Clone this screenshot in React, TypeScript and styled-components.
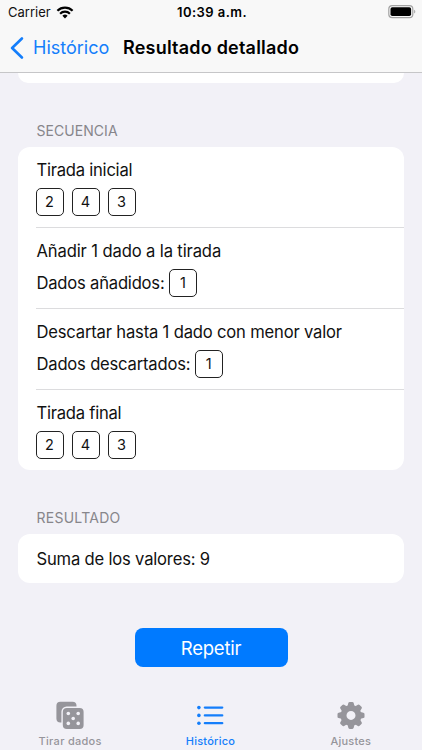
import React from "react";
import styled, { createGlobalStyle } from "styled-components";

const GlobalStyle = createGlobalStyle`
  html, body { margin: 0; padding: 0; background: #f2f1f7; }
  * { box-sizing: border-box; }
`;

const BLUE = "#147efb";

const Screen = styled.div`
  width: 422px;
  height: 750px;
  overflow: hidden;
  display: flex;
  flex-direction: column;
  background: #f2f1f7;
  color: #111;
  font-family: Inter, "Liberation Sans", sans-serif;
  font-size: 16.6px;
`;

const Label = styled.span<{ $ls?: number }>`
  white-space: nowrap;
  letter-spacing: ${(p) => p.$ls ?? 0}px;
`;

const Header = styled.header`
  height: 73px;
  flex: none;
  background: #f8f8f8;
  border-bottom: 1px solid #c6c6c8;
`;

const StatusBar = styled.div`
  height: 23px;
  display: grid;
  grid-template-columns: 1fr auto 1fr;
  align-items: center;
  padding: 1px 6px 0 8px;
  font-size: 13px;
  line-height: 22px;
`;

const Carrier = styled.div`
  display: flex;
  align-items: center;
  gap: 5px;
`;

const Clock = styled.div`
  font-weight: 600;
  color: #000;
`;

const BatterySlot = styled.div`
  display: flex;
  justify-content: flex-end;
`;

const NavBar = styled.div`
  height: 49px;
  display: flex;
  align-items: center;
  padding-left: 10px;
`;

const BackButton = styled.button`
  display: flex;
  align-items: center;
  gap: 9px;
  width: 113px;
  padding: 0;
  border: 0;
  background: none;
  color: ${BLUE};
  font: inherit;
  font-size: 18px;
`;

const Title = styled.h1`
  margin: 0;
  font-size: 18px;
  font-weight: 600;
  color: #000;
`;

const Content = styled.main`
  flex: 1;
  padding: 0 18px;
  display: flex;
  flex-direction: column;
`;

const CardEnd = styled.div`
  height: 10px;
  background: #fff;
  border-radius: 0 0 10px 10px;
`;

const SectionTitle = styled.h2`
  margin: 38px 0 6px 18.5px;
  height: 20px;
  line-height: 20px;
  font-size: 14px;
  font-weight: 400;
  color: #87868b;
`;

const Card = styled.section`
  background: #fff;
  border-radius: 12px;
  padding-left: 18px;
`;

const Step = styled.div`
  height: 81px;
  padding-top: 12px;
  & + & { border-top: 1px solid #dcdcde; padding-top: 11px; }
  &:first-child { height: 80px; padding-top: 11px; }
`;

const StepTitle = styled.div`
  height: 24px;
  line-height: 24px;
  margin-bottom: 6px;
  padding-left: 0.5px;
`;

const DiceRow = styled.div`
  display: flex;
  align-items: center;
  gap: 5px;
  padding-left: 0.5px;
`;

const Die = styled.span`
  width: 28px;
  height: 28px;
  display: grid;
  place-items: center;
  border: 1.3px solid #222;
  border-radius: 5px;
  font-size: 14.5px;
  line-height: 1;
`;

const DiceSet = styled.div`
  display: flex;
  gap: 8px;
  margin-left: -0.5px;
`;

const Total = styled.div`
  height: 49px;
  line-height: 50px;
  padding-left: 0.5px;
`;

const RepeatButton = styled.button`
  align-self: center;
  width: 153px;
  height: 39px;
  margin-top: 45px;
  padding: 1px 0 0;
  border: 0;
  border-radius: 8px;
  background: #007aff;
  color: #fff;
  font: inherit;
  font-size: 18.5px;
`;

const TabBar = styled.nav`
  height: 56px;
  flex: none;
  display: grid;
  grid-template-columns: repeat(3, 1fr);
  margin-right: 1px;
`;

const Tab = styled.div<{ $active?: boolean }>`
  display: flex;
  flex-direction: column;
  align-items: center;
  gap: 4px;
  padding-top: 6px;
  color: ${(p) => (p.$active ? BLUE : "#96959b")};
  font-size: 11px;
  font-weight: 500;
  line-height: 14px;
`;

const WifiIcon = () => (
  <svg width="18" height="13" viewBox="0 0 18 13" fill="none" stroke="#000" strokeWidth="2.2">
    <path d="M1.4 4.8a10.8 10.8 0 0 1 15.2 0" />
    <path d="M4.1 7.7a7 7 0 0 1 9.8 0" />
    <path d="M9 12.4 6.4 9.8a3.7 3.7 0 0 1 5.2 0z" fill="#000" stroke="none" />
  </svg>
);

const BatteryIcon = () => (
  <svg width="28" height="14" viewBox="0 0 28 14">
    <rect x="0.8" y="0.7" width="24" height="12" rx="3.4" fill="none" stroke="#a3a3a3" strokeWidth="1.2" />
    <rect x="2.5" y="2.3" width="20.6" height="8.8" rx="1.8" fill="#000" />
    <path d="M26.2 4.8c1.5.4 1.5 3.4 0 3.8z" fill="#a3a3a3" />
  </svg>
);

const ChevronIcon = () => (
  <svg width="14" height="22" viewBox="0 0 14 22" fill="none" stroke={BLUE} strokeWidth="2.6" strokeLinecap="round" strokeLinejoin="round">
    <path d="M11.9 1.5 2.1 11l9.800 9.500" />
  </svg>
);

const DiceIcon = () => (
  <svg width="30" height="30" viewBox="0 0 30 30" fill="currentColor">
    <path d="M5.4 1.8H17.5a4 4 0 0 1 4 4v.8H11.6a5.2 5.2 0 0 0-5.2 5.2v10.8H5.4a4 4 0 0 1-4-4V5.8a4 4 0 0 1 4-4z" />
    <rect x="7.8" y="8.1" width="20.8" height="20.8" rx="4" />
    <g fill="#f2f1f7">
      <circle cx="13.3" cy="13.5" r="1.8" />
      <circle cx="23.2" cy="13.5" r="1.8" />
      <circle cx="18.2" cy="18.5" r="1.8" />
      <circle cx="13.3" cy="23.4" r="1.8" />
      <circle cx="23.2" cy="23.4" r="1.8" />
    </g>
  </svg>
);

const ListIcon = () => (
  <svg width="30" height="30" viewBox="0 0 30 30" fill="currentColor">
    {[7.6, 15.4, 23.2].map((y) => (
      <g key={y}>
        <circle cx="3.9" cy={y} r="1.8" />
        <rect x="8.7" y={y - 1.15} width="19.7" height="2.3" rx="1.15" />
      </g>
    ))}
  </svg>
);

const GearIcon = () => (
  <svg width="30" height="30" viewBox="0 0 30 30">
    <circle cx="15" cy="15.4" r="7.5" fill="none" stroke="currentColor" strokeWidth="6" />
    {[0, 45, 90, 135, 180, 225, 270, 315].map((angle) => (
      <path
        key={angle}
        d="M11.4 6.8 12.3 3Q12.6 1.9 13.7 1.9H16.3Q17.4 1.9 17.7 3L18.6 6.8z"
        transform={`rotate(${angle} 15 15.4)`}
        fill="currentColor"
      />
    ))}
  </svg>
);

const Dice = ({ values }: { values: number[] }) => (
  <DiceSet>
    {values.map((v) => (
      <Die key={v}>{v}</Die>
    ))}
  </DiceSet>
);

export default function App() {
  return (
    <Screen>
      <GlobalStyle />
      <Header>
        <StatusBar>
          <Carrier>
            <Label>Carrier</Label>
            <WifiIcon />
          </Carrier>
          <Clock><Label $ls={0.45}>10:39 a.m.</Label></Clock>
          <BatterySlot><BatteryIcon /></BatterySlot>
        </StatusBar>
        <NavBar>
          <BackButton>
            <ChevronIcon />
            <Label>Histórico</Label>
          </BackButton>
          <Title><Label $ls={0.21}>Resultado detallado</Label></Title>
        </NavBar>
      </Header>
      <Content>
        <CardEnd />
        <SectionTitle><Label $ls={0.05}>SECUENCIA</Label></SectionTitle>
        <Card>
          <Step>
            <StepTitle><Label $ls={-0.24}>Tirada inicial</Label></StepTitle>
            <Dice values={[2, 4, 3]} />
          </Step>
          <Step>
            <StepTitle><Label $ls={-0.13}>Añadir 1 dado a la tirada</Label></StepTitle>
            <DiceRow>
              <Label $ls={-0.21}>Dados añadidos:</Label>
              <Dice values={[1]} />
            </DiceRow>
          </Step>
          <Step>
            <StepTitle><Label $ls={-0.18}>Descartar hasta 1 dado con menor valor</Label></StepTitle>
            <DiceRow>
              <Label $ls={-0.2}>Dados descartados:</Label>
              <Dice values={[1]} />
            </DiceRow>
          </Step>
          <Step>
            <StepTitle><Label $ls={-0.24}>Tirada final</Label></StepTitle>
            <Dice values={[2, 4, 3]} />
          </Step>
        </Card>
        <SectionTitle><Label $ls={0.25}>RESULTADO</Label></SectionTitle>
        <Card>
          <Total><Label $ls={-0.19}>Suma de los valores: 9</Label></Total>
        </Card>
        <RepeatButton><Label $ls={-0.25}>Repetir</Label></RepeatButton>
      </Content>
      <TabBar>
        <Tab><DiceIcon /><Label $ls={0.28}>Tirar dados</Label></Tab>
        <Tab $active><ListIcon /><Label $ls={0.22}>Histórico</Label></Tab>
        <Tab><GearIcon /><Label $ls={0.22}>Ajustes</Label></Tab>
      </TabBar>
    </Screen>
  );
}
